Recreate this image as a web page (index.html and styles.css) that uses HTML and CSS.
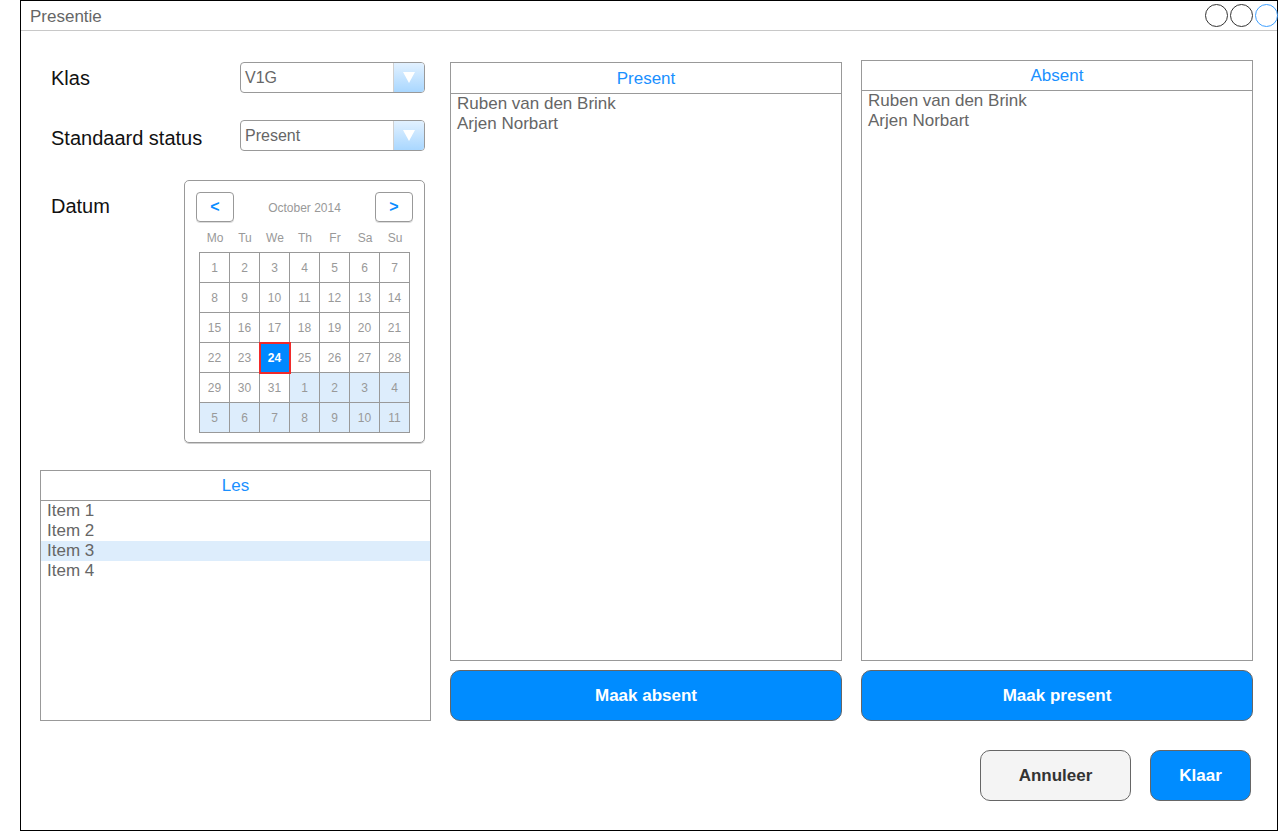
FILE: index.html
```html
<!DOCTYPE html>
<html lang="nl">
<head>
<meta charset="utf-8">
<title>Presentie</title>
<link rel="stylesheet" href="styles.css">
</head>
<body>
<div class="window">
  <div class="titlebar">
    <span class="title">Presentie</span>
    <div class="circles">
      <span class="circle"></span>
      <span class="circle"></span>
      <span class="circle blue"></span>
    </div>
  </div>
  <div class="content">
    <div class="col col-left">
      <div class="form-row">
        <span class="label">Klas</span>
        <div class="select">
          <span class="select-value">V1G</span>
          <span class="select-btn"><span class="tri"></span></span>
        </div>
      </div>
      <div class="form-row row-2">
        <span class="label label-low">Standaard status</span>
        <div class="select">
          <span class="select-value">Present</span>
          <span class="select-btn"><span class="tri"></span></span>
        </div>
      </div>
      <div class="date-row">
        <span class="label date-label">Datum</span>
        <div class="calendar">
          <div class="cal-head">
            <span class="cal-btn">&lt;</span>
            <span class="cal-month">October 2014</span>
            <span class="cal-btn">&gt;</span>
          </div>
          <div class="weekdays">
            <span>Mo</span><span>Tu</span><span>We</span><span>Th</span><span>Fr</span><span>Sa</span><span>Su</span>
          </div>
          <div class="days">
            <span class="day">1</span><span class="day">2</span><span class="day">3</span><span class="day">4</span><span class="day">5</span><span class="day">6</span><span class="day">7</span>
            <span class="day">8</span><span class="day">9</span><span class="day">10</span><span class="day">11</span><span class="day">12</span><span class="day">13</span><span class="day">14</span>
            <span class="day">15</span><span class="day">16</span><span class="day">17</span><span class="day">18</span><span class="day">19</span><span class="day">20</span><span class="day">21</span>
            <span class="day">22</span><span class="day">23</span><span class="day sel">24</span><span class="day">25</span><span class="day">26</span><span class="day">27</span><span class="day">28</span>
            <span class="day">29</span><span class="day">30</span><span class="day">31</span><span class="day other">1</span><span class="day other">2</span><span class="day other">3</span><span class="day other">4</span>
            <span class="day other">5</span><span class="day other">6</span><span class="day other">7</span><span class="day other">8</span><span class="day other">9</span><span class="day other">10</span><span class="day other">11</span>
          </div>
        </div>
      </div>
      <div class="list list-les">
        <div class="list-head">Les</div>
        <div class="item">Item 1</div>
        <div class="item">Item 2</div>
        <div class="item hl">Item 3</div>
        <div class="item">Item 4</div>
      </div>
    </div>
    <div class="col col-mid">
      <div class="list list-present">
        <div class="list-head head-tall">Present</div>
        <div class="item">Ruben van den Brink</div>
        <div class="item">Arjen Norbart</div>
      </div>
      <div class="btn btn-primary">Maak absent</div>
    </div>
    <div class="col col-right">
      <div class="list list-absent">
        <div class="list-head">Absent</div>
        <div class="item">Ruben van den Brink</div>
        <div class="item">Arjen Norbart</div>
      </div>
      <div class="btn btn-primary">Maak present</div>
    </div>
  </div>
  <div class="footer">
    <div class="btn btn-secondary">Annuleer</div>
    <div class="btn btn-primary btn-ok">Klaar</div>
  </div>
</div>
</body>
</html>
```

FILE: styles.css
```css
* { box-sizing: border-box; }

body {
  margin: 0;
  background: #fff;
  font-family: "Liberation Sans", Arial, sans-serif;
}

.window {
  margin-left: 20px;
  width: 1258px;
  height: 831px;
  border: 1px solid #000;
  display: flex;
  flex-direction: column;
}

.titlebar {
  height: 30px;
  border-bottom: 1px solid #c8c8c8;
  display: flex;
  align-items: center;
  justify-content: space-between;
  padding-left: 9px;
}

.title {
  padding-top: 2px;
  font-size: 17px;
  color: #666;
}

.circles {
  display: flex;
  gap: 2px;
  margin-right: -1px;
}

.circle {
  width: 23px;
  height: 23px;
  border: 1.5px solid #333;
  border-radius: 50%;
}

.circle.blue { border-color: #3fa0ff; }

.content {
  display: flex;
  gap: 19px;
  padding-left: 19px;
}

.col {
  display: flex;
  flex-direction: column;
}

.col-left { width: 391px; padding-top: 31px; }
.col-mid { width: 392px; padding-top: 31px; gap: 9px; }
.col-right { width: 392px; padding-top: 29px; gap: 9px; }

.form-row {
  display: flex;
  align-items: center;
  height: 31px;
}

.row-2 { margin-top: 27px; }

.label {
  width: 200px;
  padding-left: 11px;
  padding-top: 1px;
  font-size: 20px;
  color: #111;
}

.label-low { padding-top: 5px; }

.select {
  width: 185px;
  height: 31px;
  border: 1px solid #999;
  border-radius: 4px;
  display: flex;
  overflow: hidden;
}

.select-value {
  flex: 1;
  padding-left: 4px;
  display: flex;
  align-items: center;
  font-size: 16px;
  color: #666;
}

.select-btn {
  width: 31px;
  border-left: 1px solid #d0d0d0;
  background: linear-gradient(#e2f1ff, #a9d7ff);
  display: flex;
  align-items: center;
  justify-content: center;
}

.tri {
  width: 0;
  height: 0;
  border-left: 6px solid transparent;
  border-right: 6px solid transparent;
  border-top: 11px solid #fff;
}

.date-row {
  display: flex;
  margin-top: 29px;
}

.date-label {
  width: 144px;
  padding-top: 15px;
  line-height: 22px;
}

.calendar {
  width: 241px;
  height: 263px;
  border: 1px solid #999;
  border-radius: 5px;
  box-shadow: 0 1px 0 #d0d0d0;
  padding: 11px 11px 0;
}

.cal-head {
  display: flex;
  align-items: center;
  justify-content: space-between;
  height: 30px;
}

.cal-btn {
  width: 38px;
  height: 30px;
  border: 1px solid #999;
  border-radius: 4px;
  box-shadow: 0 1px 0 #ddd;
  display: flex;
  align-items: center;
  justify-content: center;
  color: #0a8cff;
  font-weight: bold;
  font-size: 16px;
}

.cal-month {
  padding-top: 2px;
  font-size: 12px;
  color: #999;
}

.weekdays {
  display: grid;
  grid-template-columns: repeat(7, 30px);
  height: 20px;
  margin: 6px 0 0 4px;
  align-items: center;
  text-align: center;
  font-size: 12px;
  color: #999;
}

.days {
  width: 211px;
  margin: 4px 0 0 3px;
  display: grid;
  grid-template-columns: repeat(7, 30px);
  grid-auto-rows: 30px;
  border-top: 1px solid #999;
  border-left: 1px solid #999;
}

.day {
  border-right: 1px solid #999;
  border-bottom: 1px solid #999;
  display: flex;
  align-items: center;
  justify-content: center;
  font-size: 12px;
  color: #999;
}

.day.other { background: #ddedfc; }

.day.sel {
  position: relative;
  z-index: 1;
  background: #0088ff;
  color: #fff;
  font-weight: bold;
  outline: 2px solid #f02a2a;
  outline-offset: -1px;
}

.list {
  border: 1px solid #999;
  display: flex;
  flex-direction: column;
}

.list-les { margin-top: 27px; height: 251px; }
.list-present { height: 599px; }
.list-absent { height: 601px; }

.list-head {
  height: 30px;
  flex: none;
  border-bottom: 1px solid #999;
  display: flex;
  align-items: center;
  justify-content: center;
  padding-top: 1px;
  font-size: 17px;
  color: #1a90ff;
}

.head-tall { height: 31px; }

.item {
  height: 20px;
  line-height: 20px;
  padding-left: 6px;
  font-size: 17px;
  color: #666;
}

.item.hl { background: #ddedfc; }

.btn {
  height: 51px;
  border: 1px solid #666;
  border-radius: 10px;
  display: flex;
  align-items: center;
  justify-content: center;
  font-size: 17px;
  font-weight: bold;
}

.btn-primary {
  background: #008cff;
  color: #fff;
}

.btn-secondary {
  width: 151px;
  background: #f4f4f4;
  color: #333;
}

.btn-ok { width: 101px; }

.footer {
  display: flex;
  justify-content: flex-end;
  gap: 19px;
  margin-top: 29px;
  padding-right: 26px;
}
```
